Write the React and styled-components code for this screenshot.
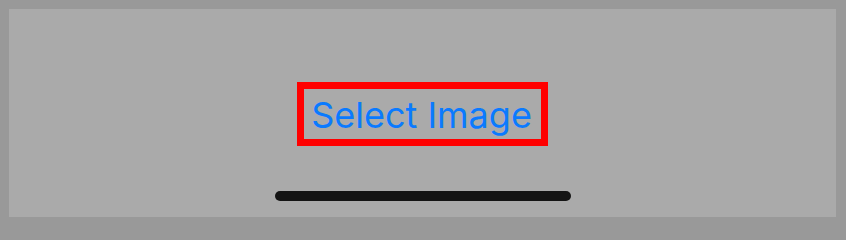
import styled, { createGlobalStyle } from 'styled-components'

const GlobalStyle = createGlobalStyle`
  html, body {
    margin: 0;
    padding: 0;
    background: #999999;
  }
  * {
    box-sizing: border-box;
  }
`

const Frame = styled.div`
  width: 846px;
  height: 226px;
  padding: 9px 10px 9px 9px;
  background: #999999;
`

const Screen = styled.div`
  height: 100%;
  background: #aaaaaa;
  display: flex;
  flex-direction: column;
  align-items: center;
  padding-top: 73px;
`

const SelectButton = styled.button`
  width: 251px;
  height: 64px;
  border: 7px solid #ff0000;
  background: transparent;
  display: flex;
  align-items: center;
  justify-content: center;
  padding: 2px 2px 0 0;
  font-family: Inter, "Noto Sans", sans-serif;
  font-size: 36px;
  color: #0a7aff;
  cursor: pointer;
`

const HomeIndicator = styled.div`
  margin-top: 45px;
  width: 296px;
  height: 10px;
  border-radius: 5px;
  background: #141414;
`

export default function App() {
  return (
    <>
      <GlobalStyle />
      <Frame>
        <Screen>
          <SelectButton>Select Image</SelectButton>
          <HomeIndicator />
        </Screen>
      </Frame>
    </>
  )
}
